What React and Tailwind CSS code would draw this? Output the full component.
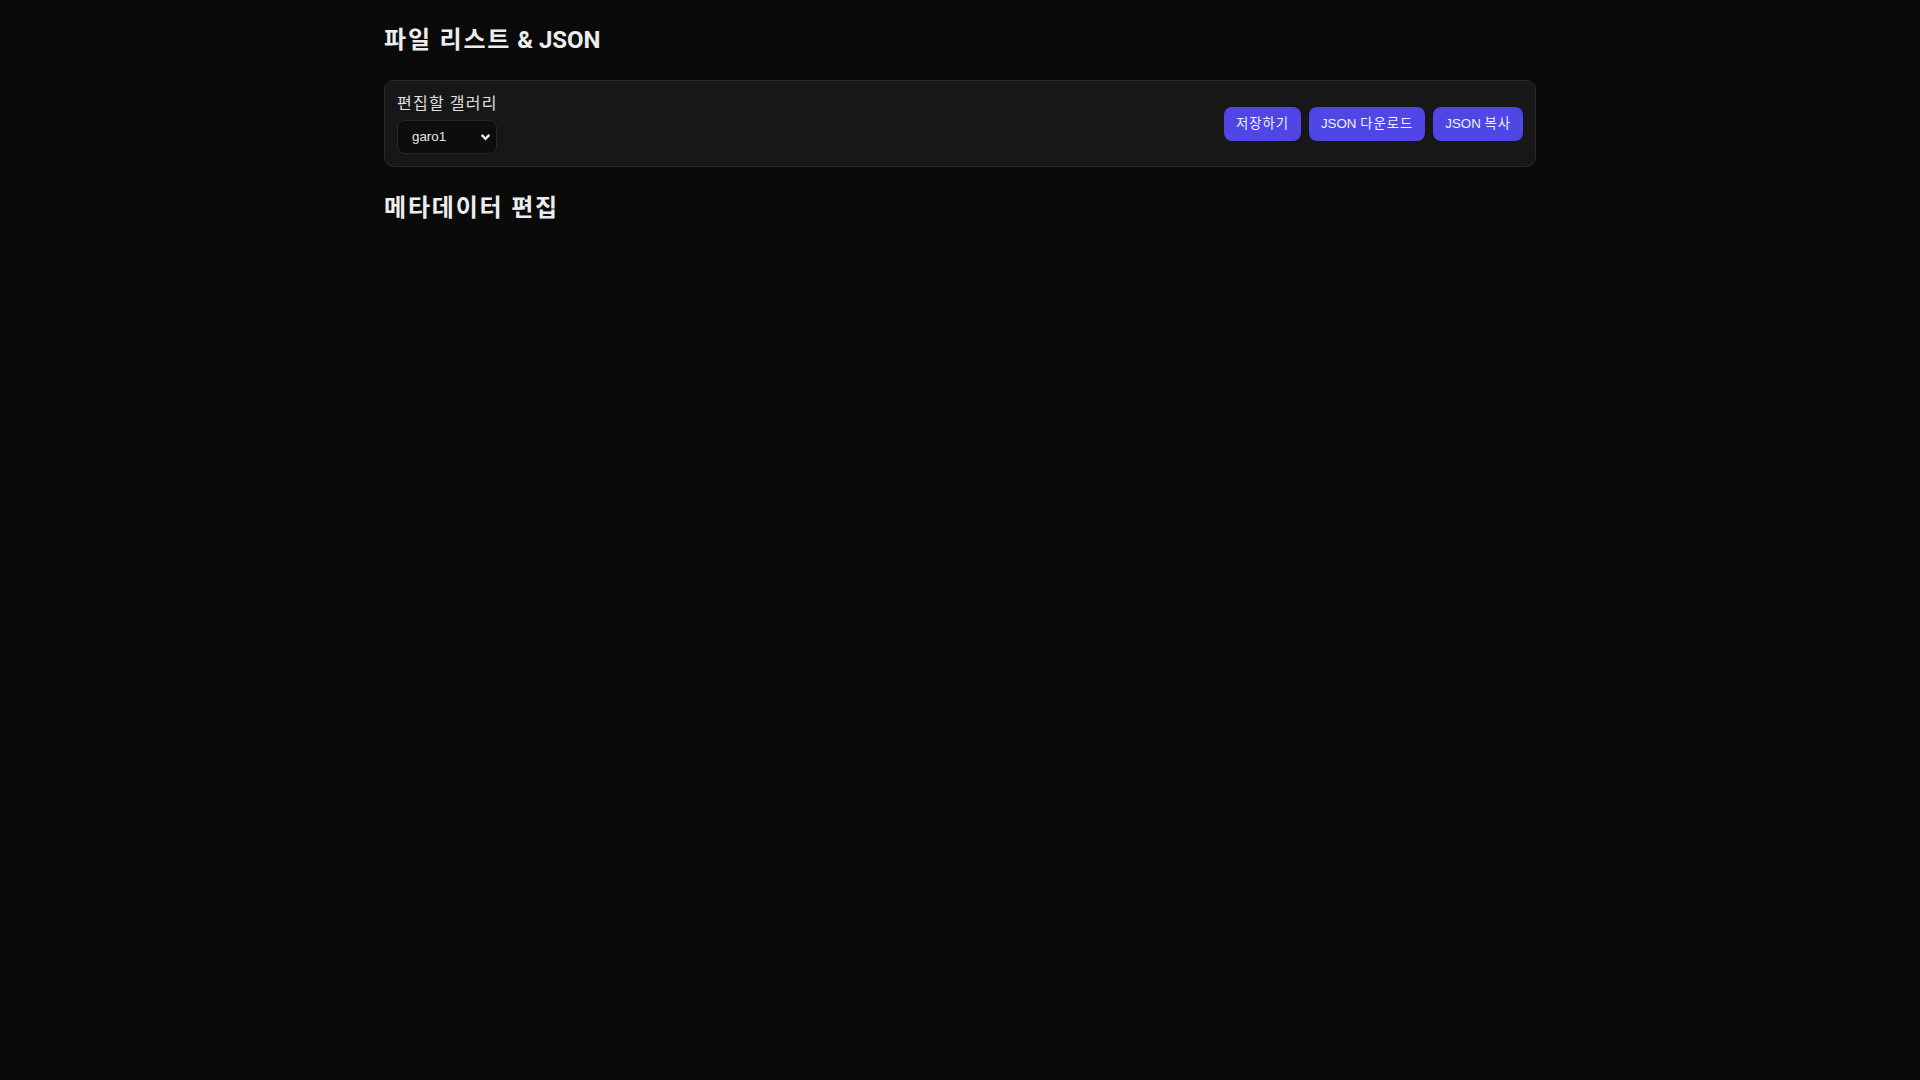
import React from "react";

const sans = { fontFamily: "Roboto, 'Noto Sans CJK KR', sans-serif" };

function Ko({ children }) {
  return <span className="tracking-[0.075em]">{children}</span>;
}

function ActionButton({ children }) {
  return (
    <button
      type="button"
      className="h-[34px] px-3 rounded-lg bg-[#4f46e5] text-[13.33px] text-[#eef0ff] font-['Liberation_Sans','Noto_Sans_CJK_KR',sans-serif] leading-none"
    >
      {children}
    </button>
  );
}

export default function App() {
  return (
    <div className="min-h-screen bg-[#0a0a0a] text-[#ededed]" style={sans}>
      <div className="max-w-6xl mx-auto pt-6 flex flex-col gap-6">
        <h1 className="text-2xl font-bold leading-8">
          <Ko>파일 리스트</Ko> &amp; JSON
        </h1>

        <div className="flex items-center justify-between rounded-[10px] border border-[#2a2a2a] bg-[#171717] p-3">
          <div className="flex flex-col gap-2">
            <span className="text-base leading-[19px] font-['Noto_Sans_CJK_KR',sans-serif] text-[#e0e0e0] tracking-[0.08em]">
              편집할 갤러리
            </span>
            <div className="relative w-[100px]">
              <select className="appearance-none w-full h-[34px] rounded-lg border border-[#262626] bg-[#0d0d0d] pl-[14px] pr-6 text-[13.33px] text-[#e5e5e5] font-['Liberation_Sans',sans-serif]">
                <option>garo1</option>
              </select>
              <svg
                className="pointer-events-none absolute right-[6px] top-1/2 -translate-y-1/2"
                width="11"
                height="11"
                viewBox="0 0 10 10"
              >
                <path d="M1.5 3 L5 6.6 L8.5 3" fill="none" stroke="#ededed" strokeWidth="2.2" />
              </svg>
            </div>
          </div>
          <div className="flex items-center gap-2">
            <ActionButton>
              <Ko>저장하기</Ko>
            </ActionButton>
            <ActionButton>
              JSON <Ko>다운로드</Ko>
            </ActionButton>
            <ActionButton>
              JSON <Ko>복사</Ko>
            </ActionButton>
          </div>
        </div>

        <h2 className="text-2xl font-bold leading-8 pt-px">
          <Ko>메타데이터 편집</Ko>
        </h2>
      </div>
    </div>
  );
}
